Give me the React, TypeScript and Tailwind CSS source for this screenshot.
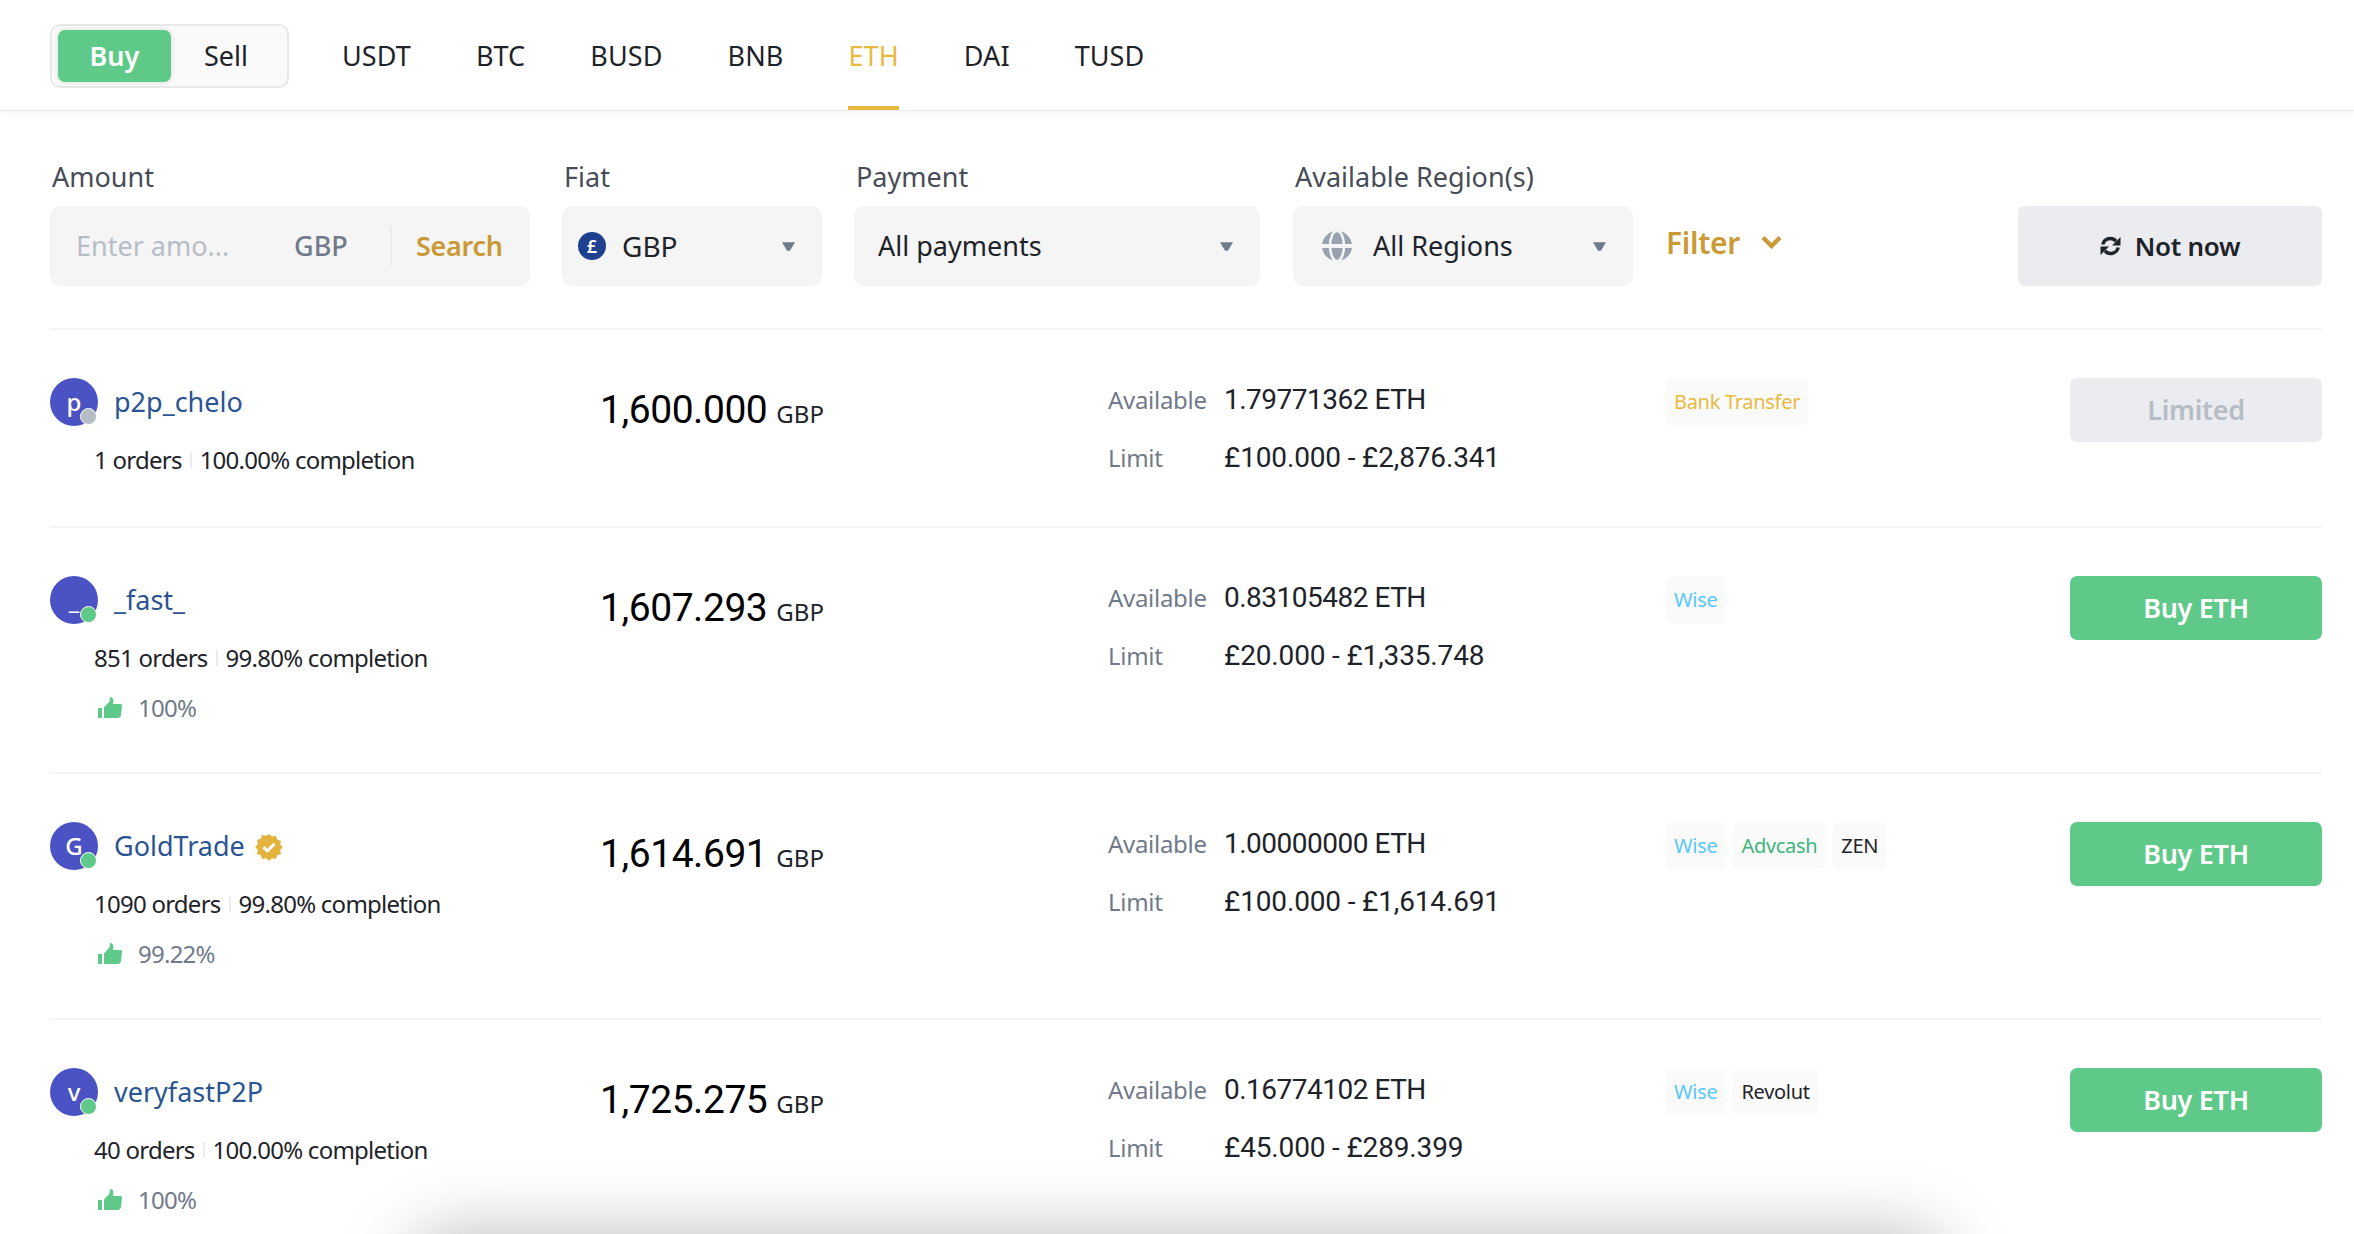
import React from "react";

const SANS = "font-['Noto_Sans',sans-serif]";
const NUM = "font-['Roboto',sans-serif]";

const tabs = ["USDT", "BTC", "BUSD", "BNB", "ETH", "DAI", "TUSD"];

type Tag = { label: string; color: string };
type Row = {
  name: string;
  letter: string;
  online: boolean;
  badge?: boolean;
  orders: string;
  completion: string;
  rate?: string;
  price: string;
  available: string;
  limit: string;
  tags: Tag[];
  limited?: boolean;
};

const WISE = "text-[#5ac8fa]";
const rows: Row[] = [
  { name: "p2p_chelo", letter: "p", online: false, orders: "1 orders", completion: "100.00% completion", price: "1,600.000", available: "1.79771362 ETH", limit: "£100.000 - £2,876.341", tags: [{ label: "Bank Transfer", color: "text-[#e8b93f]" }], limited: true },
  { name: "_fast_", letter: "_", online: true, orders: "851 orders", completion: "99.80% completion", rate: "100%", price: "1,607.293", available: "0.83105482 ETH", limit: "£20.000 - £1,335.748", tags: [{ label: "Wise", color: WISE }] },
  { name: "GoldTrade", letter: "G", online: true, badge: true, orders: "1090 orders", completion: "99.80% completion", rate: "99.22%", price: "1,614.691", available: "1.00000000 ETH", limit: "£100.000 - £1,614.691", tags: [{ label: "Wise", color: WISE }, { label: "Advcash", color: "text-[#3fb57b]" }, { label: "ZEN", color: "text-[#1e2329]" }] },
  { name: "veryfastP2P", letter: "v", online: true, orders: "40 orders", completion: "100.00% completion", rate: "100%", price: "1,725.275", available: "0.16774102 ETH", limit: "£45.000 - £289.399", tags: [{ label: "Wise", color: WISE }, { label: "Revolut", color: "text-[#1e2329]" }] },
];

function Caret() {
  return (
    <svg width="13" height="9" viewBox="0 0 14 9" className="shrink-0">
      <path d="M0 0H14L8.5 9H5.5Z" fill="#707a8a" />
    </svg>
  );
}

function Thumb() {
  return (
    <svg width="24" height="21" viewBox="0 0 24 21">
      <path d="M0 11h4v10H0z" fill="#5ec988" />
      <path d="M6 10.5 11.5 4.5 12 0c2.5 0 3.6 2 3.4 4.2L15 7h7.5c1 0 1.6.8 1.5 1.8l-1 9.2c-.3 1.8-1.5 3-3.2 3H6z" fill="#5ec988" />
    </svg>
  );
}

function Seal() {
  return (
    <svg width="28" height="28" viewBox="0 0 28 28" className="shrink-0">
      <path
        d="M14 1l3 2.6 3.9-.8 1.3 3.8 3.8 1.3-.8 3.9L27.8 14l-2.6 3 .8 3.9-3.8 1.3-1.3 3.8-3.9-.8L14 27.8l-3-2.6-3.9.8-1.3-3.8-3.8-1.3.8-3.9L.2 14l2.6-3-.8-3.9 3.8-1.3 1.3-3.8 3.9.8z"
        fill="#e3b33e"
      />
      <path d="M8.5 14.2l3.8 3.6 7.2-7" fill="none" stroke="#fff" strokeWidth="3" />
    </svg>
  );
}

function Globe() {
  return (
    <svg width="30" height="30" viewBox="0 0 30 30" className="shrink-0">
      <circle cx="15" cy="15" r="15" fill="#9aa1ae" />
      <ellipse cx="15" cy="15" rx="7" ry="15" fill="none" stroke="#f5f5f5" strokeWidth="2.5" />
      <rect x="0" y="13" width="30" height="4" fill="#f5f5f5" />
    </svg>
  );
}

function Sync() {
  return (
    <svg width="21" height="20" viewBox="0 0 21 20" className="shrink-0">
      <path d="M2.8 8.5A7.6 7.6 0 0 1 16 5.2" fill="none" stroke="#1e2329" strokeWidth="3.4" />
      <path d="M20.5 1v8.5h-8.5z" fill="#1e2329" />
      <path d="M18.2 11.5A7.6 7.6 0 0 1 5 14.8" fill="none" stroke="#1e2329" strokeWidth="3.4" />
      <path d="M.5 19v-8.5h8.5z" fill="#1e2329" />
    </svg>
  );
}

function Chevron() {
  return (
    <svg width="21" height="14" viewBox="0 0 21 14">
      <path d="M2 2.5l8.5 8.5L19 2.5" fill="none" stroke="#c99a35" strokeWidth="4.4" />
    </svg>
  );
}

function Field({ label, className, children }: { label: string; className: string; children: React.ReactNode }) {
  return (
    <div className={className}>
      <div className="mb-[12px] h-[35px] pl-[2px] text-[27px] leading-[35px] text-[#474d57]">{label}</div>
      <div className="flex h-[80px] items-center rounded-[10px] bg-[#f5f5f5]">{children}</div>
    </div>
  );
}

function OfferRow({ row }: { row: Row }) {
  return (
    <div className="flex border-t-2 border-[#f5f5f5] pt-[48px]" style={{ height: row.rate ? 246 : 198 }}>
      <div className="w-[550px] shrink-0">
        <div className="flex h-[48px] items-center">
          <div className="relative flex h-[48px] w-[48px] items-center justify-center rounded-full bg-[#4a52c4] text-[24px] font-medium text-white">
            {row.letter}
            <span className={`absolute bottom-[1px] right-[1px] h-[17px] w-[17px] rounded-full border-[1.5px] border-white ${row.online ? "bg-[#5ec988]" : "bg-[#b7bdc6]"}`} />
          </div>
          <span className="ml-[16px] text-[27px] text-[#2b5592]">{row.name}</span>
          {row.badge && <span className="ml-[10px] mt-[2px]"><Seal /></span>}
        </div>
        <div className="ml-[44px] mt-[17px] flex h-[34px] items-center text-[24px] tracking-[-0.75px] text-[#1e2329]">
          <span>{row.orders}</span>
          <span className="mx-[8px] h-[16px] w-[2px] bg-[#eaecef]" />
          <span>{row.completion}</span>
        </div>
        {row.rate && (
          <div className="ml-[48px] mt-[16px] flex h-[34px] items-center text-[24px] tracking-[-0.75px] text-[#707a8a]">
            <span className="-mt-[2px]"><Thumb /></span>
            <span className="ml-[16px]">{row.rate}</span>
          </div>
        )}
      </div>
      <div className={`mt-[8px] flex h-[48px] w-[508px] shrink-0 items-baseline ${NUM}`}>
        <span className="text-[39px] leading-[48px] tracking-[-0.45px] text-black">{row.price}</span>
        <span className={`ml-[9px] text-[24px] text-[#1e2329] ${SANS}`}>GBP</span>
      </div>
      <div className="w-[558px] shrink-0 pt-[6px]">
        <div className="flex h-[32px] items-center">
          <span className="w-[116px] text-[24px] tracking-[-0.3px] text-[#707a8a]">Available</span>
          <span className={`text-[28px] tracking-[-0.5px] text-[#1e2329] ${NUM}`}>{row.available}</span>
        </div>
        <div className="mt-[26px] flex h-[32px] items-center">
          <span className="w-[116px] text-[24px] tracking-[-0.3px] text-[#707a8a]">Limit</span>
          <span className={`text-[28px] tracking-[-0.15px] text-[#1e2329] ${NUM}`}>{row.limit}</span>
        </div>
      </div>
      <div className="mt-[1px] flex h-[46px] flex-1 gap-[8px]">
        {row.tags.map((t) => (
          <span key={t.label} className={`flex h-[46px] items-center rounded-[4px] bg-[#fafafa] px-[8px] text-[20px] tracking-[-0.3px] ${t.color}`}>
            {t.label}
          </span>
        ))}
      </div>
      <div
        className={`flex h-[64px] w-[252px] shrink-0 items-center justify-center rounded-[7px] text-[27px] font-semibold tracking-[-0.3px] ${
          row.limited ? "bg-[#eaecef] text-[#b7bdc6]" : "bg-[#5ec988] text-white"
        }`}
      >
        {row.limited ? "Limited" : "Buy ETH"}
      </div>
    </div>
  );
}

export default function App() {
  return (
    <div className={`relative h-[1234px] w-[2354px] overflow-hidden bg-white ${SANS}`}>
      <header className="flex h-[111px] items-center border-b border-[#eaecef] pl-[50px] pt-[2px] shadow-[0_2px_8px_rgba(0,0,0,0.05)]">
        <div className="flex h-[64px] w-[239px] items-center rounded-[10px] border-2 border-[#e8e8e8] bg-[#fafafa] pl-[6px]">
          <div className="flex h-[52px] w-[113px] items-center justify-center rounded-[7px] bg-[#5ec988] text-[27px] font-semibold text-white shadow-[0_0_6px_rgba(0,0,0,0.12)]">Buy</div>
          <div className="w-[110px] text-center text-[27px] text-[#1e2329]">Sell</div>
        </div>
        <nav className="-mt-[2px] ml-[53px] flex h-[110px] gap-[65px] tracking-[0.1px]">
          {tabs.map((t) => (
            <div key={t} className={`flex h-[110px] items-center border-b-4 pt-[6px] text-[27px] ${t === "ETH" ? "border-[#e8b93f] text-[#e8b93f]" : "border-transparent text-[#1e2329]"}`}>
              {t}
            </div>
          ))}
        </nav>
      </header>

      <main className="pl-[50px] pr-[32px]">
        <div className="flex h-[217px] items-start pt-[48px]">
          <Field label="Amount" className="w-[480px] shrink-0">
            <span className="ml-[26px] w-[218px] text-[27px] text-[#b7bdc6]">Enter amo...</span>
            <span className="w-[96px] text-[27px] font-medium text-[#707a8a]">GBP</span>
            <span className="h-[40px] w-[2px] bg-[#eaecef]" />
            <span className="ml-[24px] text-[27px] font-semibold tracking-[-0.3px] text-[#c99a35]">Search</span>
          </Field>
          <Field label="Fiat" className="ml-[32px] w-[260px] shrink-0">
            <span className="ml-[16px] flex h-[28px] w-[28px] items-center justify-center rounded-full bg-[#1f3f8f] text-[18px] font-semibold text-white">£</span>
            <span className="ml-[16px] flex-1 text-[28px] text-[#1e2329]">GBP</span>
            <span className="mr-[27px]"><Caret /></span>
          </Field>
          <Field label="Payment" className="ml-[32px] w-[406px] shrink-0">
            <span className="ml-[24px] flex-1 text-[27px] text-[#1e2329]">All payments</span>
            <span className="mr-[27px]"><Caret /></span>
          </Field>
          <Field label="Available Region(s)" className="ml-[33px] w-[340px] shrink-0">
            <span className="ml-[29px]"><Globe /></span>
            <span className="ml-[21px] flex-1 text-[27px] text-[#1e2329]">All Regions</span>
            <span className="mr-[27px]"><Caret /></span>
          </Field>
          <div className="ml-[33px] mt-[47px] flex h-[80px] items-center gap-[21px] pb-[8px] text-[30px] font-semibold tracking-[-0.3px] text-[#c99a35]">
            <span>Filter</span>
            <Chevron />
          </div>
          <div className="ml-auto mt-[47px] flex h-[80px] w-[304px] items-center justify-center gap-[14px] rounded-[7px] bg-[#eaecef] text-[26px] font-semibold tracking-[-0.3px] text-[#1e2329]">
            <Sync />
            <span>Not now</span>
          </div>
        </div>
        {rows.map((r) => (
          <OfferRow key={r.name} row={r} />
        ))}
      </main>

      <div className="absolute left-[410px] top-[1234px] h-[200px] w-[1535px] rounded-[40px] shadow-[0_0_70px_rgba(0,0,0,0.27)]" />
    </div>
  );
}
